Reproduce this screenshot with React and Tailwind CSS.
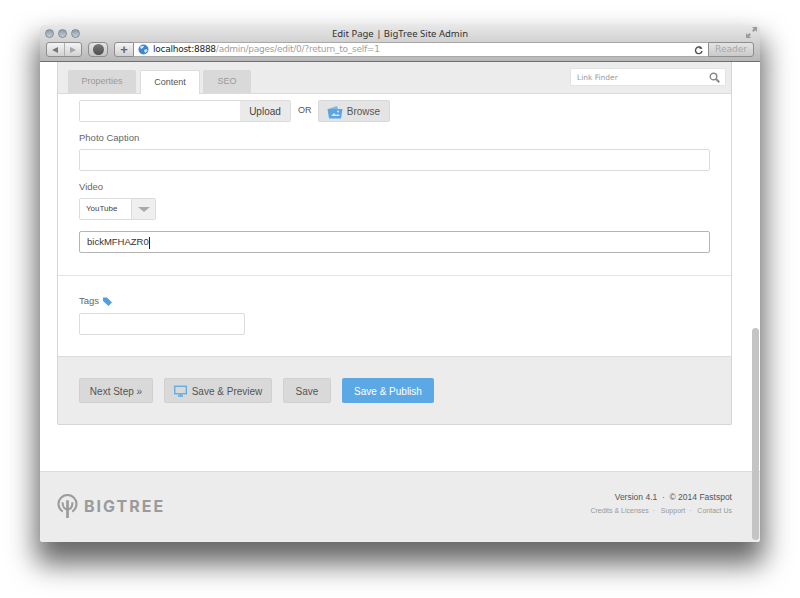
import React from "react";

const sans = "font-['Liberation_Sans',Arial,sans-serif]";
const chrome = "font-['DejaVu_Sans',sans-serif]";

function TrafficDot() {
  return (
    <span className="w-[9px] h-[9px] rounded-full border border-[#7d8a96] bg-gradient-to-b from-[#8f9eaa] to-[#c3ced6]" />
  );
}

function Field({ className = "", focused = false, children }) {
  return (
    <div
      className={`h-[22px] bg-white rounded-[2px] border flex items-center px-[7px] pt-px ${
        focused ? "border-[#b5b5b5]" : "border-[#dcdcdc]"
      } ${className}`}
    >
      {children}
    </div>
  );
}

function GrayButton({ width, children }) {
  return (
    <button
      className={`${width} h-[25px] pt-px bg-[#d9d9d9] border border-[#d0d0d0] rounded-[2px] text-[10px] text-[#555] flex items-center justify-center gap-[4px]`}
    >
      {children}
    </button>
  );
}

export default function App() {
  return (
    <div className={`w-[800px] h-[598px] bg-white overflow-hidden pt-[25px] pl-[40px] ${sans}`}>
      <div className="relative w-[720px] h-[517px] flex flex-col rounded-[3px] bg-white shadow-[0_18px_28px_4px_rgba(0,0,0,0.6)]">
        {/* safari chrome */}
        <div className="h-[37px] shrink-0 rounded-t-[4px] bg-gradient-to-b from-[#e8e8e8] to-[#b8b8b8] border-b border-[#6f6f6f] flex flex-col">
          <div className="relative h-[17px] flex items-center pl-[5px] gap-[4px]">
            <TrafficDot />
            <TrafficDot />
            <TrafficDot />
            <span className="absolute left-0 right-0 top-[2px] text-center text-[9.5px] leading-[14px] text-[#333] font-['Noto_Sans',sans-serif]">
              Edit Page | BigTree Site Admin
            </span>
            <svg className="absolute right-[3px] top-[2px]" width="11" height="11" viewBox="0 0 11 11" fill="#9c9c9c">
              <path d="M6 0h5v5L9.3 3.3 7.5 5 6 3.5 7.7 1.7zM5 11H0V6l1.7 1.7L3.5 6 5 7.5 3.3 9.3z" />
            </svg>
          </div>
          <div className="h-[19px] flex items-start pl-[6px]">
            <div className="w-[36px] h-[15px] rounded-[3px] border border-[#8e8e8e] bg-gradient-to-b from-[#f4f4f4] to-[#d2d2d2] flex">
              <span className="flex-1 flex items-center justify-center border-r border-[#b0b0b0]">
                <span className="w-0 h-0 border-y-[3.5px] border-y-transparent border-r-[6px] border-r-[#777]" />
              </span>
              <span className="flex-1 flex items-center justify-center">
                <span className="w-0 h-0 border-y-[3.5px] border-y-transparent border-l-[6px] border-l-[#a5a5a5]" />
              </span>
            </div>
            <div className="ml-[6px] w-[20px] h-[15px] rounded-[4px] border border-[#8e8e8e] bg-gradient-to-b from-[#e4e4e4] to-[#c4c4c4] flex items-center justify-center">
              <span className="w-[11px] h-[11px] rounded-full bg-gradient-to-b from-[#777] to-[#4f4f4f]" />
            </div>
            <div className="ml-[6px] w-[20px] h-[15px] rounded-l-[3px] border border-[#8e8e8e] bg-gradient-to-b from-[#f4f4f4] to-[#d2d2d2] flex items-center justify-center text-[13px] leading-none font-bold text-[#666]">
              +
            </div>
            <div className={`w-[574px] h-[15px] bg-white border-y border-[#a8a8a8] flex items-center pl-[4px] pr-[5px] text-[9px] ${chrome}`}>
              <svg width="11" height="11" viewBox="0 0 11 11">
                <circle cx="5.5" cy="5.5" r="5" fill="#3f86d0" />
                <path d="M2 3q2-2 4-1l-1 2-2 1zM6 6l3-1 .5 2-2.5 2z" fill="#d3e6f5" />
              </svg>
              <span className="ml-[4px] text-[#222] tracking-[-0.25px]">localhost:8888</span>
              <span className="text-[#a0a0a0] tracking-[-0.25px]">/admin/pages/edit/0/?return_to_self=1</span>
              <svg className="ml-auto" width="9" height="10" viewBox="0 0 9 10" fill="none" stroke="#555" strokeWidth="1.4">
                <path d="M7.5 3.5A3.3 3.3 0 1 0 8 6" />
                <path d="M5.5 0.5v3.3h3z" fill="#555" stroke="none" />
              </svg>
            </div>
            <div className={`w-[46px] h-[15px] rounded-r-[3px] border border-[#8e8e8e] bg-gradient-to-b from-[#e4e4e4] to-[#cacaca] flex items-center justify-center text-[9px] text-[#a8a8a8] ${chrome}`}>
              Reader
            </div>
          </div>
        </div>

        {/* page */}
        <div className="flex-1 flex flex-col overflow-hidden">
          <div className="pl-[17px] pr-[28px]">
            <div className="h-[363px] border-x border-b border-[#d6d6d6] rounded-b-[2px] flex flex-col">
              {/* tabs */}
              <div className="h-[32px] shrink-0 bg-[#ececec] border-b border-[#dcdcdc] flex items-end pl-[10px] pr-[5px] relative">
                <div className="w-[68px] h-[23px] pt-px bg-[#d9d9d9] rounded-t-[2px] flex items-center justify-center text-[9px] text-[#999]">
                  Properties
                </div>
                <div className="ml-[4px] w-[60px] h-[24px] -mb-px pt-px bg-white border-x border-t border-[#dcdcdc] rounded-t-[2px] flex items-center justify-center text-[9px] text-[#555]">
                  Content
                </div>
                <div className="ml-[3px] w-[48px] h-[23px] pt-px bg-[#d9d9d9] rounded-t-[2px] flex items-center justify-center text-[9px] text-[#999]">
                  SEO
                </div>
                <div className="ml-auto mb-[7px] w-[156px] h-[18px] bg-white rounded-[2px] border border-[#e2e2e2] flex items-center justify-between pl-[6px] pr-[5px]">
                  <span className={`pt-[2px] text-[7.5px] text-[#9a9a9a] ${chrome}`}>Link Finder</span>
                  <svg width="11" height="11" viewBox="0 0 11 11" fill="none" stroke="#8a8a8a">
                    <circle cx="4.5" cy="4.5" r="3.3" strokeWidth="1.4" />
                    <path d="M7 7l3.3 3.3" strokeWidth="2" />
                  </svg>
                </div>
              </div>

              {/* form */}
              <div className="h-[262px] shrink-0 bg-white flex flex-col">
                <div className="px-[21px] pt-[6px]">
                  <div className="flex items-center">
                    <div className="w-[212px] h-[22px] flex border border-[#dcdcdc] rounded-[2px] overflow-hidden">
                      <div className="flex-1 bg-white" />
                      <div className="w-[50px] pt-px bg-[#eaeaea] flex items-center justify-center text-[10px] text-[#444]">
                        Upload
                      </div>
                    </div>
                    <span className="ml-[7px] text-[9px] text-[#555]">OR</span>
                    <div className="ml-[6px] w-[72px] h-[22px] pt-px bg-[#e4e4e4] border border-[#d8d8d8] rounded-[2px] flex items-center justify-center gap-[4px] text-[10px] text-[#555]">
                      <svg width="16" height="14" viewBox="0 0 16 14">
                        <path d="M1 4l9-3 1 3z" fill="#7fb7e4" />
                        <path d="M0.5 4h15l-1.5 9.5H2z" fill="#5ba6e2" />
                        <path d="M4 11l3-3 2 2 2-1 2 2z" fill="#d6eafa" />
                        <circle cx="11" cy="6.5" r="1" fill="#d6eafa" />
                      </svg>
                      Browse
                    </div>
                  </div>
                  <div className="mt-[9px] h-[12px] text-[9.5px] leading-[14px] text-[#666]">Photo Caption</div>
                  <Field className="mt-[6px] w-[631px]" />
                  <div className="mt-[9px] h-[12px] text-[9.5px] leading-[14px] text-[#666]">Video</div>
                  <div className="mt-[6px] w-[77px] h-[22px] flex border border-[#dcdcdc] rounded-[2px] bg-white">
                    <div className="w-[52px] border-r border-[#dcdcdc] pl-[6px] flex items-center text-[8px] text-[#444]">YouTube</div>
                    <div className="flex-1 bg-[#efefef] flex items-center justify-center">
                      <span className="w-0 h-0 border-x-[6px] border-x-transparent border-t-[5px] border-t-[#aaa]" />
                    </div>
                  </div>
                  <Field focused className="mt-[11px] w-[631px] text-[9.5px] text-[#333]">
                    bickMFHAZR0<span className="w-px h-[12px] bg-[#222]" />
                  </Field>
                </div>
                <div className="mt-[22px] border-t border-[#e2e2e2] px-[21px] pt-[19px]">
                  <div className="h-[12px] flex items-center gap-[4px] text-[9.5px] text-[#666]">
                    Tags
                    <svg width="9" height="9" viewBox="0 0 9 9">
                      <path d="M0 0.5h4l5 5-3.5 3.5-5.5-5z" fill="#4f9fe0" />
                    </svg>
                  </div>
                  <Field className="mt-[6px] w-[166px]" />
                </div>
              </div>

              {/* actions */}
              <div className="flex-1 bg-[#ececec] border-t border-[#dcdcdc] flex items-center gap-[11px] pl-[21px]">
                <GrayButton width="w-[74px]">Next Step »</GrayButton>
                <GrayButton width="w-[108px]">
                  <svg className="mr-[1px]" width="13" height="12" viewBox="0 0 13 12" fill="none">
                    <rect x="0.75" y="1.25" width="11.5" height="7.5" stroke="#5aa9e6" strokeWidth="1.3" />
                    <path d="M4 11h5M6.5 9v2" stroke="#5aa9e6" strokeWidth="1.3" />
                  </svg>
                  Save &amp; Preview
                </GrayButton>
                <GrayButton width="w-[48px]">Save</GrayButton>
                <button className="w-[92px] h-[25px] pt-px bg-[#5ba8e5] rounded-[2px] text-[10px] text-white">
                  Save &amp; Publish
                </button>
              </div>
            </div>
          </div>

          {/* site footer */}
          <div className="mt-[46px] flex-1 bg-[#ececec] border-t border-[#dcdcdc] rounded-b-[3px] flex justify-between pl-[17px] pr-[28px] pt-[21px]">
            <div className="flex items-center h-[26px] gap-[6px]">
              <svg width="21" height="26" viewBox="0 0 22 26" fill="none" stroke="#9b9b9b" strokeWidth="2.2">
                <path d="M6 18.8a9.4 9.4 0 1 1 10 0" />
                <path d="M11 25.5V7" strokeWidth="2.8" />
                <path d="M5.8 9c0 4.5 2 7.5 5.2 7.5s5.2-3 5.2-7.5" />
              </svg>
              <span className="text-[16px] leading-none font-['Inter',sans-serif] font-bold tracking-[2px] text-[#9b9b9b]">BIGTREE</span>
            </div>
            <div className="-mt-[2px] text-right">
              <div className="text-[8.5px] leading-[12px] text-[#555]">Version 4.1 &nbsp;·&nbsp; © 2014 Fastspot</div>
              <div className="mt-[2px] text-[7px] leading-[12px] text-[#999]">
                Credits &amp; Licenses &nbsp;·&nbsp;&nbsp; Support &nbsp;·&nbsp;&nbsp; Contact Us
              </div>
            </div>
          </div>
        </div>

        {/* scrollbar */}
        <div className="absolute right-[1px] top-[303px] w-[7px] h-[212px] rounded-full bg-[#c4c4c4]" />
      </div>
    </div>
  );
}
